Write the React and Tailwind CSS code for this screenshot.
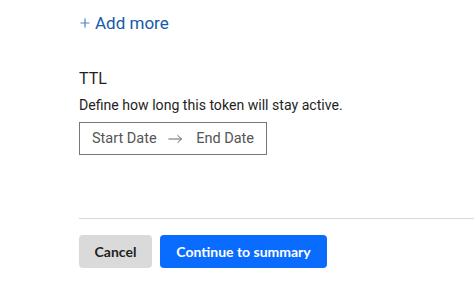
export default function App() {
  return (
    <div className="w-[474px] h-[302px] bg-white overflow-hidden" style={{ fontFamily: "Roboto, 'Noto Sans', sans-serif" }}>
      <div className="pl-[79px] pt-[11px]">
        <button className="flex items-center gap-[5px] text-[17px] leading-[24px] text-[#155aa6] whitespace-nowrap">
          <svg width="10" height="10" viewBox="0 0 10 10" className="ml-[1px]">
            <path d="M5 0.5V9.5M0.5 5H9.5" stroke="#4f82c2" strokeWidth="1.2" fill="none" />
          </svg>
          <span>Add more</span>
        </button>
        <div className="mt-[33px] text-[16px] leading-[22px] text-[#1f1f1f]">TTL</div>
        <div className="mt-[5px] text-[14.1px] leading-[20px] text-[#1f1f1f] whitespace-nowrap">Define how long this token will stay active.</div>
        <div className="mt-[7px] w-[188px] h-[33px] border border-[#777777] flex items-center px-[12px] text-[14.5px] text-[#555555] whitespace-nowrap">
          <span>Start Date</span>
          <svg width="16" height="10" viewBox="0 0 16 10" className="ml-[11px] mr-[14px]">
            <path d="M0.5 5H15M10.5 0.8L15 5L10.5 9.2" stroke="#666666" strokeWidth="1.1" fill="none" />
          </svg>
          <span>End Date</span>
        </div>
        <div className="mt-[63px] h-px bg-[#d9d9d9]" />
        <div className="mt-[16px] flex gap-[8px]" style={{ fontFamily: "Lato, 'Noto Sans', sans-serif" }}>
          <button className="h-[33px] w-[73px] rounded-[4px] bg-[#dadada] text-[14px] font-bold text-[#222222]">Cancel</button>
          <button className="h-[33px] w-[167px] rounded-[4px] bg-[#0a6cff] text-[14px] font-bold text-white">Continue to summary</button>
        </div>
      </div>
    </div>
  );
}
